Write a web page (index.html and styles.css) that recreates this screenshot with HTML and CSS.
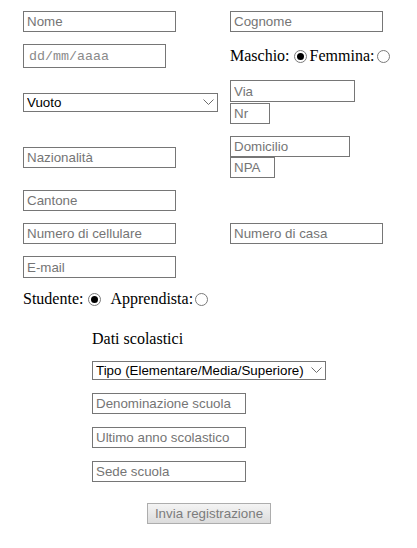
FILE: index.html
```html
<!DOCTYPE html>
<html lang="it">
<head>
<meta charset="utf-8">
<title>Registrazione</title>
<link rel="stylesheet" href="styles.css">
</head>
<body>
<form class="form">
  <div class="grid">
    <div class="cell"><input class="field w153" type="text" placeholder="Nome"></div>
    <div class="cell"><input class="field w153" type="text" placeholder="Cognome"></div>

    <div class="cell"><input class="field date" type="text" placeholder="dd/mm/aaaa"></div>
    <div class="cell label-line">Maschio:<input class="radio r-m1" type="radio" name="sesso" checked>Femmina:<input class="radio r-m2" type="radio" name="sesso"></div>

    <div class="cell">
      <span class="select-wrap w195">
        <select class="select"><option>Vuoto</option></select>
        <svg class="chev" width="11" height="6" viewBox="0 0 11 6"><polyline points="0.5,0.5 5.5,5.5 10.5,0.5" fill="none" stroke="#6d6d6d" stroke-width="1"/></svg>
      </span>
    </div>
    <div class="cell stack gap1">
      <input class="field w125" type="text" placeholder="Via">
      <input class="field w40" type="text" placeholder="Nr">
    </div>

    <div class="cell"><input class="field w153" type="text" placeholder="Nazionalità"></div>
    <div class="cell stack">
      <input class="field w120" type="text" placeholder="Domicilio">
      <input class="field w45" type="text" placeholder="NPA">
    </div>

    <div class="cell"><input class="field w153" type="text" placeholder="Cantone"></div>
    <div class="cell"></div>

    <div class="cell"><input class="field w153" type="text" placeholder="Numero di cellulare"></div>
    <div class="cell"><input class="field w153" type="text" placeholder="Numero di casa"></div>

    <div class="cell"><input class="field w153 h22" type="text" placeholder="E-mail"></div>
    <div class="cell"></div>

    <div class="cell span label-line">Studente:<input class="radio r-s1" type="radio" name="tipo" checked>Apprendista:<input class="radio r-s2" type="radio" name="tipo"></div>
  </div>

  <div class="school">
    <div class="heading">Dati scolastici</div>
    <span class="select-wrap w234">
      <select class="select"><option>Tipo (Elementare/Media/Superiore)</option></select>
      <svg class="chev" width="11" height="6" viewBox="0 0 11 6"><polyline points="0.5,0.5 5.5,5.5 10.5,0.5" fill="none" stroke="#6d6d6d" stroke-width="1"/></svg>
    </span>
    <input class="field w154" type="text" placeholder="Denominazione scuola">
    <input class="field w154" type="text" placeholder="Ultimo anno scolastico">
    <input class="field w154" type="text" placeholder="Sede scuola">
    <button class="submit" type="button" disabled>Invia registrazione</button>
  </div>
</form>
</body>
</html>
```

FILE: styles.css
```css
html, body {
  margin: 0;
  padding: 0;
  background: #ffffff;
}

body {
  font-family: "Liberation Serif", "Times New Roman", serif;
  font-size: 16px;
  color: #000;
}

.form {
  padding: 11px 0 0 23px;
}

.grid {
  display: grid;
  grid-template-columns: 207px auto;
  row-gap: 12px;
  align-items: center;
}

.cell {
  display: flex;
  align-items: center;
}

.cell.span {
  grid-column: 1 / -1;
}

.stack {
  flex-direction: column;
  align-items: flex-start;
}

.gap1 {
  gap: 1px;
}

.label-line {
  line-height: 18px;
  height: 18px;
  white-space: nowrap;
}

.field {
  box-sizing: border-box;
  height: 21px;
  margin: 0;
  padding: 0 3px;
  border: 1px solid #767676;
  border-radius: 0;
  font-family: "Liberation Sans", Arial, sans-serif;
  font-size: 13.33px;
  color: #000;
  background: #fff;
  outline: none;
}

.field::placeholder {
  color: #757575;
  opacity: 1;
}

.h22 { height: 22px; }
.w153 { width: 153px; }
.w154 { width: 154px; }
.w125 { width: 125px; height: 22px; }
.w120 { width: 120px; }
.w40 { width: 40px; }
.w45 { width: 45px; }

.date {
  width: 143px;
  height: 24px;
  padding-left: 5px;
  font-family: "Liberation Mono", "Courier New", monospace;
  font-size: 13.33px;
}

.date::placeholder {
  color: #8a8a8a;
}

.select-wrap {
  position: relative;
  display: inline-block;
}

.w195 { width: 195px; }
.w234 { width: 234px; }

.select {
  -webkit-appearance: none;
  appearance: none;
  box-sizing: border-box;
  width: 100%;
  height: 19px;
  margin: 0;
  padding: 0 20px 0 3px;
  border: 1px solid #767676;
  border-radius: 0;
  background: #fff;
  font-family: "Liberation Sans", Arial, sans-serif;
  font-size: 13.33px;
  color: #000;
  display: block;
}

.chev {
  position: absolute;
  right: 4px;
  top: 6px;
  pointer-events: none;
}

.radio {
  -webkit-appearance: none;
  appearance: none;
  box-sizing: border-box;
  width: 13px;
  height: 13px;
  border: 1px solid #7a7a7a;
  border-radius: 50%;
  background: #fff;
  margin: 0;
  position: relative;
  flex: none;
}

.radio:checked::after {
  content: "";
  position: absolute;
  left: 2px;
  top: 2px;
  width: 7px;
  height: 7px;
  border-radius: 50%;
  background: #000;
}

.r-m1 { margin: 1px 3px 0 4px; }
.r-m2 { margin: 1px 0 0 3px; }
.r-s1 { margin: 1px 9px 0 5px; }
.r-s2 { margin: 1px 0 0 2px; }

.school {
  width: 234px;
  margin: 22px 0 0 69px;
  display: flex;
  flex-direction: column;
  align-items: flex-start;
  gap: 13px;
}

.heading {
  line-height: 18px;
  height: 18px;
}

.submit {
  align-self: center;
  box-sizing: border-box;
  width: 124px;
  height: 21px;
  margin-top: 8px;
  padding: 0;
  border: 1px solid #adadad;
  border-radius: 0;
  background: linear-gradient(#f4f4f4, #dcdcdc);
  font-family: "Liberation Sans", Arial, sans-serif;
  font-size: 13.33px;
  color: #7c7c7c;
}
```
